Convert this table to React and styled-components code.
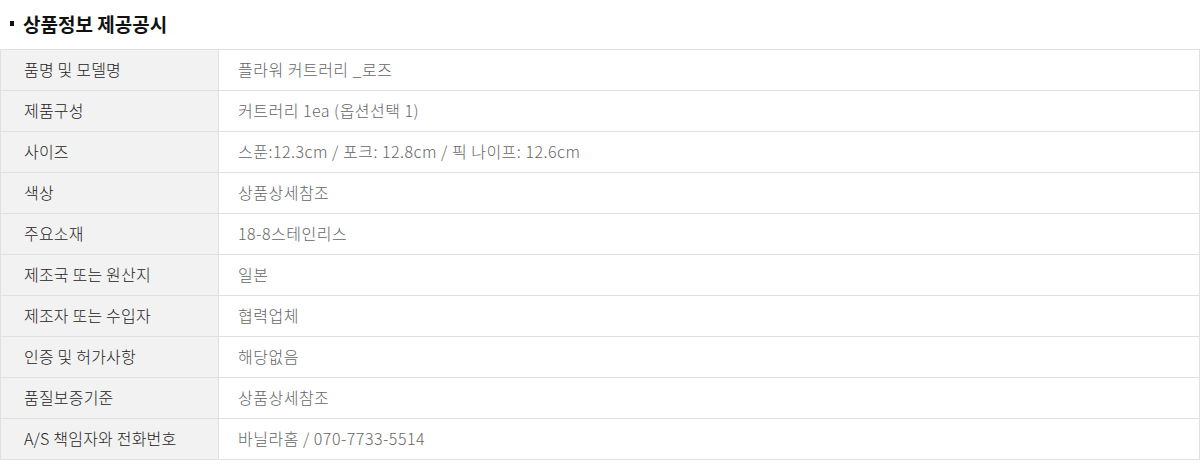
import React from 'react';
import styled, { createGlobalStyle } from 'styled-components';

const GlobalStyle = createGlobalStyle`
    body {
        margin: 0;
        background: #ffffff;
        font-family: "Noto Sans CJK KR", "Noto Sans", sans-serif;
    }
`;

const rows = [
    ['품명 및 모델명', '플라워 커트러리 _로즈'],
    ['제품구성', '커트러리 1ea (옵션선택 1)'],
    ['사이즈', '스푼:12.3cm / 포크: 12.8cm / 픽 나이프: 12.6cm'],
    ['색상', '상품상세참조'],
    ['주요소재', '18-8스테인리스'],
    ['제조국 또는 원산지', '일본'],
    ['제조자 또는 수입자', '협력업체'],
    ['인증 및 허가사항', '해당없음'],
    ['품질보증기준', '상품상세참조'],
    ['A/S 책임자와 전화번호', '바닐라홈 / 070-7733-5514'],
];

const InfoNotice = () => {
    return (
        <Wrap>
            <Title>상품정보 제공공시</Title>
            <Table>
                <tbody>
                    {rows.map(([label, value]) => (
                        <tr key={label}>
                            <Label>{label}</Label>
                            <Value>{value}</Value>
                        </tr>
                    ))}
                </tbody>
            </Table>
        </Wrap>
    );
};

export default function App() {
    return (
        <>
            <GlobalStyle />
            <InfoNotice />
        </>
    );
}

const Wrap = styled.div`
    width: 1200px;
    padding-top: 10px;
`;

const Title = styled.h2`
    display: flex;
    align-items: center;
    margin: 0 0 13px 0;
    padding-left: 10px;
    height: 26px;
    font-size: 19px;
    font-weight: 700;
    color: #111;

    &::before {
        content: '';
        width: 4px;
        height: 5px;
        margin-right: 9px;
        margin-top: 1px;
        background: #111;
    }
`;

const Table = styled.table`
    width: 1200px;
    border-collapse: collapse;
    table-layout: fixed;
    border: 1px solid #e0e0e0;

    td {
        box-sizing: border-box;
        height: 41px;
        padding: 0 0 2px 0;
        border: 1px solid #e0e0e0;
        font-size: 16px;
        line-height: 24px;
        font-weight: 300;
        vertical-align: middle;
    }
`;

const Label = styled.td`
    width: 218px;
    padding-left: 23px !important;
    background: #f2f2f2;
    color: #222;
    letter-spacing: 0.2px;
`;

const Value = styled.td`
    padding-left: 19px !important;
    color: #666;
    letter-spacing: 0.5px;
`;
